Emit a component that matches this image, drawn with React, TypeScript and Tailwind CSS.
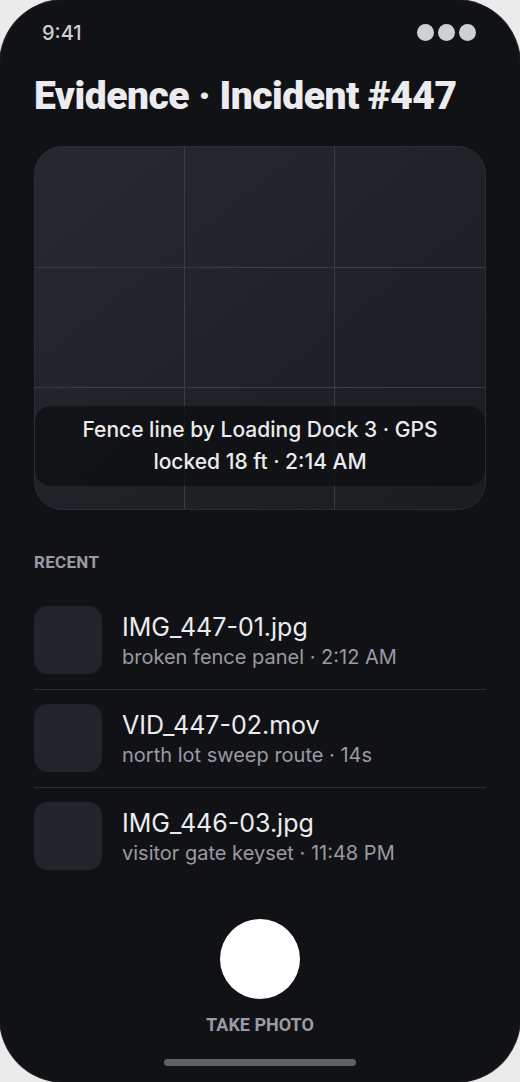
import React from "react";

const recentItems = [
  { name: "IMG_447-01.jpg", meta: "broken fence panel · 2:12 AM" },
  { name: "VID_447-02.mov", meta: "north lot sweep route · 14s" },
  { name: "IMG_446-03.jpg", meta: "visitor gate keyset · 11:48 PM" },
];

const condensed = "font-['Roboto',sans-serif]";
const body = "font-['Inter','Noto_Sans',sans-serif]";

function StatusBar() {
  return (
    <div className="flex items-center justify-between pl-[42px] pr-[44px] pt-[21px] h-[44px]">
      <span className={`${body} text-[20px] font-medium text-[#cfd0d4]`}>9:41</span>
      <div className="flex gap-[4px]">
        <span className="w-[17px] h-[17px] rounded-full bg-[#cfd0d4]" />
        <span className="w-[17px] h-[17px] rounded-full bg-[#cfd0d4]" />
        <span className="w-[17px] h-[17px] rounded-full bg-[#cfd0d4]" />
      </div>
    </div>
  );
}

function Viewfinder() {
  return (
    <div className="relative h-[364px] rounded-[28px] border border-[#2a2c32] bg-gradient-to-br from-[#262930] to-[#1a1c21] overflow-hidden">
      {/* rule-of-thirds grid */}
      <div className="absolute inset-0 grid grid-cols-3 grid-rows-3">
        {Array.from({ length: 9 }).map((_, i) => (
          <div
            key={i}
            className={`${i % 3 !== 2 ? "border-r" : ""} ${i < 6 ? "border-b" : ""} border-[#3a3d44]`}
          />
        ))}
      </div>
      <div className="absolute left-0 right-0 bottom-[23px] rounded-[16px] bg-[#0e0f12]/80 px-[40px] py-[8px]">
        <p className={`${body} text-center text-[21px] leading-[32px] font-medium text-[#ececee]`}>
          Fence line by Loading Dock 3 · GPS locked 18 ft · 2:14 AM
        </p>
      </div>
    </div>
  );
}

function RecentRow({ name, meta, last }: { name: string; meta: string; last: boolean }) {
  return (
    <div className={`flex items-center gap-[20px] pt-[14px] pb-[15px] ${last ? "" : "border-b border-[#2c2d33]"}`}>
      <div className="w-[68px] h-[68px] rounded-[14px] bg-[#22232b] shrink-0" />
      <div className="flex flex-col pt-[4px]">
        <span className={`${body} text-[25px] leading-[31px] text-[#ececee]`}>{name}</span>
        <span className={`${body} text-[20px] leading-[29px] text-[#9a9ba2]`}>{meta}</span>
      </div>
    </div>
  );
}

export default function App() {
  return (
    <div className="w-[520px] h-[1082px] bg-[#ebebec]">
      <div className="w-full h-full rounded-[64px] bg-[#111216] shadow-[0_0_0_1px_#2a2b30] overflow-hidden flex flex-col">
        <StatusBar />

        <div className="px-[34px] flex flex-col">
          <h1 className={`${condensed} mt-[28px] text-[39px] leading-[48px] font-black tracking-[-0.5px] text-[#ececf0] whitespace-nowrap`}>
            Evidence · Incident #447
          </h1>

          <div className="mt-[26px]">
            <Viewfinder />
          </div>

          <h2 className={`${condensed} mt-[42px] text-[17px] leading-[20px] font-bold tracking-[0.3px] text-[#9a9ba2]`}>
            RECENT
          </h2>

          <div className="mt-[20px] flex flex-col">
            {recentItems.map((item, i) => (
              <RecentRow key={item.name} {...item} last={i === recentItems.length - 1} />
            ))}
          </div>
        </div>

        <div className="mt-auto flex flex-col items-center pb-[16px]">
          <button className="w-[80px] h-[80px] rounded-full bg-white" />
          <span className={`${condensed} mt-[16px] text-[18px] leading-[20px] font-bold text-[#9a9ba2]`}>
            TAKE PHOTO
          </span>
          <div className="mt-[24px] w-[192px] h-[7px] rounded-full bg-[#5f6166]" />
        </div>
      </div>
    </div>
  );
}
